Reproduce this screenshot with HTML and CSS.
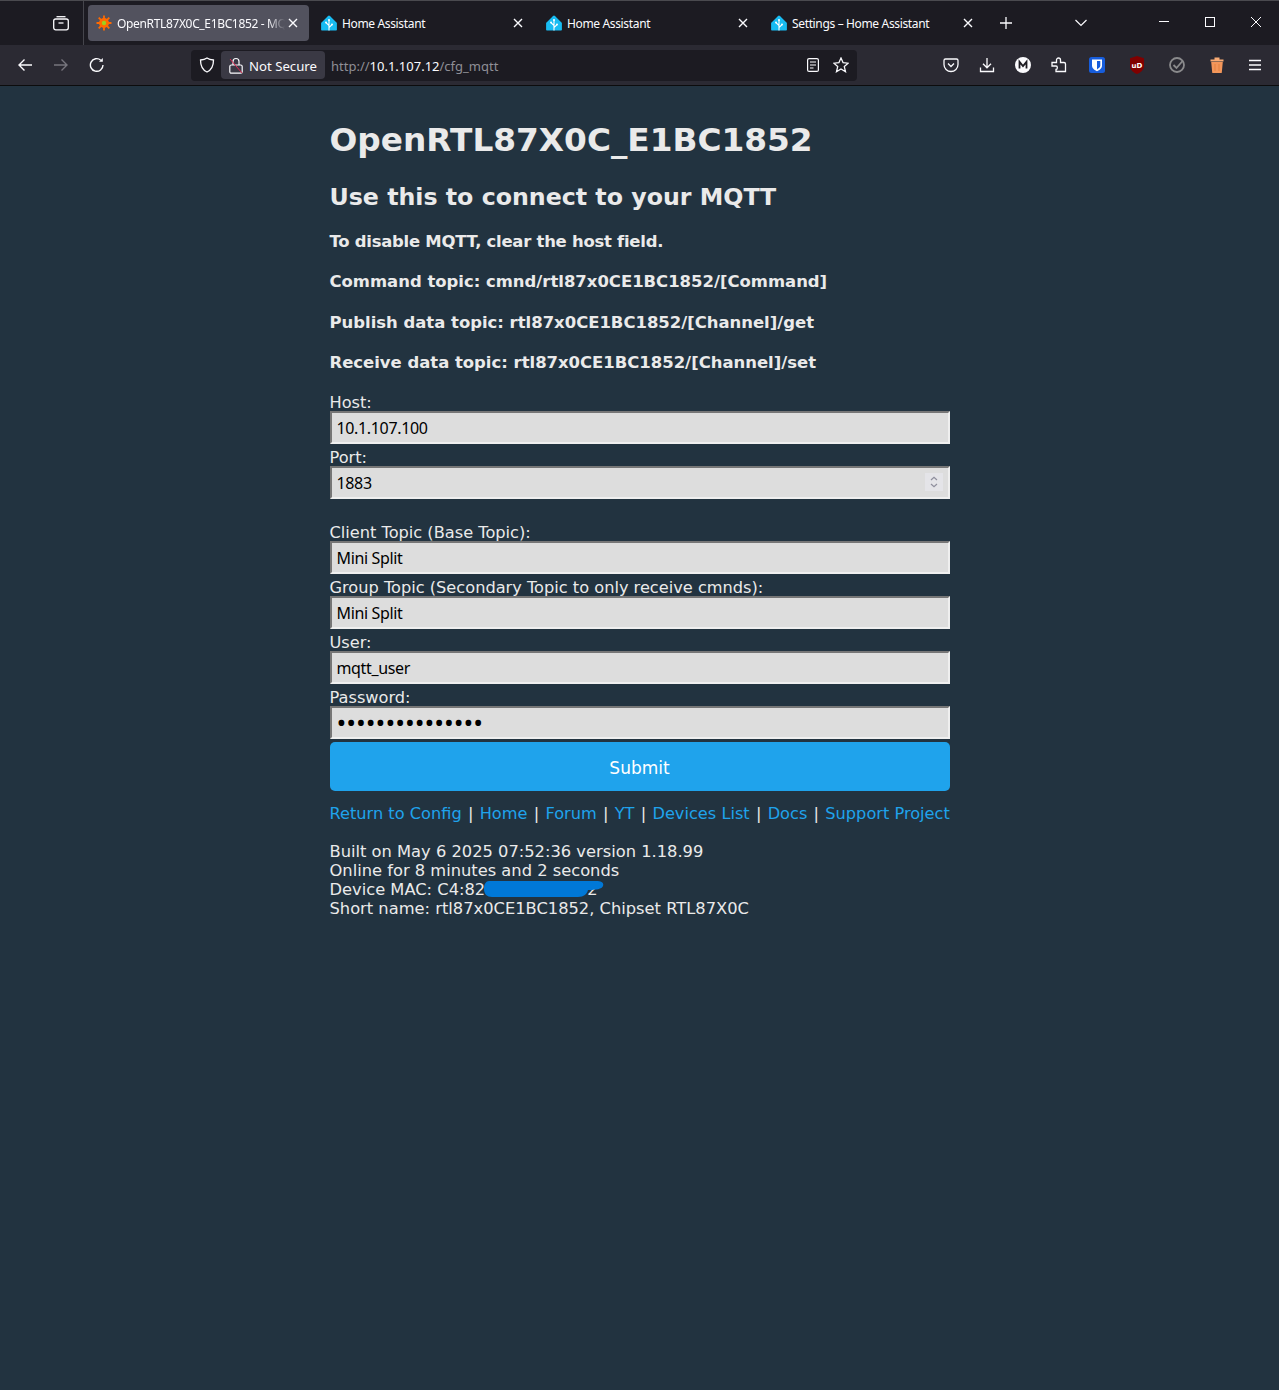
FILE: index.html
```html
<!DOCTYPE html>
<html lang="en">
<head>
    <meta charset="UTF-8">
    <title>OpenRTL87X0C_E1BC1852 - MQTT</title>
    <link rel="stylesheet" href="styles.css">
</head>
<body>

<svg class="defs" width="0" height="0">
    <symbol id="ha" viewBox="0 0 16 16">
        <path d="M7 .9 a1.400 1.400 0 0 1 2 0 L15.500 7.400 a1 1 0 0 1 .4 .8 V14.800 a.8 .8 0 0 1 -.8 .8 H.9 a.8 .8 0 0 1 -.8 -.8 V8.200 a1 1 0 0 1 .4 -.8 Z" fill="#18bcf2"/>
        <path d="M8 5 V15.500 M8 10.500 L5.200 7.800 M8 12.500 L10.800 9.800" fill="none" stroke="#fff" stroke-width="1.100"/>
        <circle cx="8" cy="5" r="1" fill="#fff"/><circle cx="5" cy="7.600" r="1" fill="#fff"/><circle cx="11" cy="9.600" r="1" fill="#fff"/>
    </symbol>
    <symbol id="x" viewBox="0 0 10 10">
        <path d="M1 1 L9 9 M9 1 L1 9" fill="none" stroke="#fbfbfe" stroke-width="1.4"/>
    </symbol>
</svg>

<header class="chrome">
    <div class="tabbar">
        <div class="view-btn">
            <svg width="16" height="16" viewBox="0 0 16 16" fill="none" stroke="#fbfbfe" stroke-width="1.3"><path d="M3.5 1.7 H12.5"/><rect x=".7" y="4" width="14.6" height="10.8" rx="2"/><path d="M5.5 8 H10.5"/></svg>
        </div>
        <div class="tab tab-active">
            <svg class="tab-icon" width="16" height="16" viewBox="0 0 16 16"><g stroke="#ff6a00" stroke-width="1.800"><path d="M8 .5 V15.500 M.5 8 H15.500 M2.700 2.700 L13.300 13.300 M13.300 2.700 L2.700 13.300"/></g><circle cx="8" cy="8" r="5" fill="#ff6a00"/><circle cx="8" cy="8" r="2.200" fill="#9ccf1f"/></svg>
            <span class="tab-title tab-fade">OpenRTL87X0C_E1BC1852 - MQTT</span>
            <svg class="tab-close" width="10" height="10"><use href="#x"/></svg>
        </div>
        <div class="tab">
            <svg class="tab-icon" width="16" height="16"><use href="#ha"/></svg>
            <span class="tab-title">Home Assistant</span>
            <svg class="tab-close" width="10" height="10"><use href="#x"/></svg>
        </div>
        <div class="tab">
            <svg class="tab-icon" width="16" height="16"><use href="#ha"/></svg>
            <span class="tab-title">Home Assistant</span>
            <svg class="tab-close" width="10" height="10"><use href="#x"/></svg>
        </div>
        <div class="tab">
            <svg class="tab-icon" width="16" height="16"><use href="#ha"/></svg>
            <span class="tab-title">Settings – Home Assistant</span>
            <svg class="tab-close" width="10" height="10"><use href="#x"/></svg>
        </div>
        <div class="new-tab">
            <svg width="14" height="14" viewBox="0 0 14 14" fill="none" stroke="#fbfbfe" stroke-width="1.3"><path d="M7 1 V13 M1 7 H13"/></svg>
        </div>
        <div class="tab-list">
            <svg width="14" height="8" viewBox="0 0 14 8" fill="none" stroke="#fbfbfe" stroke-width="1.2"><path d="M1.5 1 L7 6.5 L12.5 1"/></svg>
        </div>
        <div class="window-btns">
            <svg width="12" height="12" viewBox="0 0 12 12" stroke="#fbfbfe" fill="none"><path d="M1 5.5 H11"/></svg>
            <svg width="12" height="12" viewBox="0 0 12 12" stroke="#fbfbfe" fill="none"><rect x="1.5" y="1.5" width="9" height="9"/></svg>
            <svg width="12" height="12" viewBox="0 0 12 12" stroke="#fbfbfe" fill="none"><path d="M1 1 L11 11 M11 1 L1 11"/></svg>
        </div>
    </div>

    <div class="toolbar">
        <div class="nav-btns">
            <svg width="16" height="16" viewBox="0 0 16 16" fill="none" stroke="#fbfbfe" stroke-width="1.4"><path d="M15 8 H2 M7.5 2.5 L2 8 L7.5 13.5"/></svg>
            <svg width="16" height="16" viewBox="0 0 16 16" fill="none" stroke="#77767e" stroke-width="1.4"><path d="M1 8 H14 M8.500 2.5 L14 8 L8.500 13.5"/></svg>
            <svg width="16" height="16" viewBox="0 0 16 16" fill="none" stroke="#fbfbfe" stroke-width="1.4"><path d="M14 8 A6.300 6.300 0 1 1 11.800 3.200"/><path d="M13.800 1 V4.800 H10" fill="#fbfbfe" stroke="none"/></svg>
        </div>
        <div class="urlbar">
            <svg class="shield" width="16" height="16" viewBox="0 0 16 16" fill="none" stroke="#fbfbfe" stroke-width="1.3"><path d="M8 1 C10 2.400 12 2.800 14.500 3 C14.500 9 12.500 13 8 15 C3.500 13 1.500 9 1.500 3 C4 2.800 6 2.400 8 1 Z"/></svg>
            <div class="not-secure">
                <svg width="14" height="17" viewBox="0 0 14 17" fill="none" stroke="#fbfbfe" stroke-width="1.200"><path d="M4 8 V4.500 A3 3 0 0 1 10 4.500 V8"/><rect x=".8" y="8" width="12.400" height="8.200" rx="1.500"/><path d="M1 2 L13 16" stroke="#e22850" stroke-width="1"/></svg>
                <span class="not-secure-text">Not Secure</span>
            </div>
            <div class="url"><span class="url-dim">http://</span>10.1.107.12<span class="url-dim">/cfg_mqtt</span></div>
            <svg class="reader" width="12" height="14" viewBox="0 0 12 14" fill="none" stroke="#fbfbfe" stroke-width="1.200"><rect x=".6" y=".6" width="10.800" height="12.800" rx="1.500"/><path d="M3 4 H9 M3 7 H9 M3 10 H6.500"/></svg>
            <svg class="star" width="16" height="16" viewBox="0 0 16 16" fill="none" stroke="#fbfbfe" stroke-width="1.300"><path d="M8 1 L10.100 5.700 L15.200 6.200 L11.300 9.600 L12.500 14.700 L8 12 L3.500 14.700 L4.700 9.600 L.8 6.200 L5.900 5.700 Z"/></svg>
        </div>
        <div class="addons">
            <span class="addon"><svg width="16" height="16" viewBox="0 0 16 16" fill="none" stroke="#fbfbfe" stroke-width="1.300"><path d="M2.500 2 H13.500 A1.500 1.500 0 0 1 15 3.500 V7.500 A7 7 0 0 1 1 7.500 V3.500 A1.500 1.500 0 0 1 2.500 2 Z"/><path d="M5 6.500 L8 9.500 L11 6.500"/></svg></span>
            <span class="addon"><svg width="16" height="16" viewBox="0 0 16 16" fill="none" stroke="#fbfbfe" stroke-width="1.300"><path d="M8 1 V10.500 M4 6.800 L8 10.800 L12 6.800 M1.500 10.500 V14.500 H14.500 V10.500"/></svg></span>
            <span class="addon"><svg width="16" height="16" viewBox="0 0 16 16"><circle cx="8" cy="8" r="8" fill="#fbfbfe"/><path d="M4.500 11.500 V4.800 L8 9 L11.500 4.800 V11.500" fill="none" stroke="#1c1b22" stroke-width="1.800"/></svg></span>
            <span class="addon"><svg width="16" height="16" viewBox="0 0 16 16" fill="none" stroke="#fbfbfe" stroke-width="1.300"><path d="M1 9 V5.500 H5.500 V3 A2 2 0 0 1 9.500 3 V5.500 H13 A1.500 1.500 0 0 1 14.500 7 V14.500 H5 V12.500 C6.800 12.500 6.800 9 5 9 Z"/></svg></span>
            <span class="addon addon-wide"><svg width="16" height="16" viewBox="0 0 16 16"><rect width="16" height="16" rx="2.500" fill="#175ddc"/><path d="M3 2.500 H13 V8.500 C13 11.500 10.500 13 8 14.300 C5.500 13 3 11.500 3 8.500 Z" fill="#fff"/><path d="M8 4 H11.300 V8.500 C11.300 10.300 9.600 11.400 8 12.400 Z" fill="#175ddc"/></svg></span>
            <span class="addon addon-wide"><svg width="14" height="18" viewBox="0 0 14 18"><path d="M7 0 L14 2.200 V10 C14 14 10 17 7 18 C4 17 0 14 0 10 V2.200 Z" fill="#800000"/><text class="ublock" x="7" y="11.500">uD</text></svg></span>
            <span class="addon addon-wide"><svg width="16" height="16" viewBox="0 0 16 16" fill="none" stroke="#8a8a8c" stroke-width="1.800"><circle cx="8" cy="8" r="7"/><path d="M4.500 8 L7.500 11 L14 3.500"/></svg></span>
            <span class="addon addon-wide"><svg width="14" height="16" viewBox="0 0 14 16"><path d="M.5 2.500 H13.500 V4.500 H.5 Z M4.500 .5 H9.500 V2.500 H4.500 Z" fill="#f9ab74"/><path d="M1.200 5 H12.800 L11.800 15.500 A.5 .5 0 0 1 11.300 16 H2.700 A.5 .5 0 0 1 2.200 15.500 Z" fill="#f3965a"/><path d="M5 7 V14 M9 7 V14" stroke="#e2803f" stroke-width="1"/></svg></span>
            <span class="addon"><svg width="14" height="12" viewBox="0 0 14 12" stroke="#fbfbfe" stroke-width="1.300"><path d="M1 1.500 H13 M1 6 H13 M1 10.500 H13"/></svg></span>
        </div>
    </div>
</header>

<main class="page">
    <div class="container">
        <h1>OpenRTL87X0C_E1BC1852</h1>
        <h2>Use this to connect to your MQTT</h2>
        <h3 class="first-note">To disable MQTT, clear the host field.</h3>
        <h3>Command topic: cmnd/rtl87x0CE1BC1852/[Command]</h3>
        <h3>Publish data topic: rtl87x0CE1BC1852/[Channel]/get</h3>
        <h3>Receive data topic: rtl87x0CE1BC1852/[Channel]/set</h3>

        <form class="mqtt-form">
            <label class="field">Host:<input class="text-input" type="text" value="10.1.107.100"></label>
            <label class="field field-spaced">Port:
                <span class="number-wrap">
                    <input class="text-input" type="text" value="1883">
                    <span class="spinner">
                        <svg width="8" height="12" viewBox="0 0 8 12" fill="none" stroke="#8f8f9d" stroke-width="1.200"><path d="M1 4 L4 1.200 L7 4 M1 8 L4 10.800 L7 8"/></svg>
                    </span>
                </span>
            </label>
            <label class="field">Client Topic (Base Topic):<input class="text-input" type="text" value="Mini Split"></label>
            <label class="field">Group Topic (Secondary Topic to only receive cmnds):<input class="text-input" type="text" value="Mini Split"></label>
            <label class="field">User:<input class="text-input" type="text" value="mqtt_user"></label>
            <label class="field">Password:<input class="text-input password-input" type="password" value="aaaaaaaaaaaaaaa"></label>
            <button class="submit-button" type="button">Submit</button>
        </form>

        <nav class="links">
            <a href="#">Return to Config</a> | <a href="#">Home</a> | <a href="#">Forum</a> | <a href="#">YT</a> | <a href="#">Devices List</a> | <a href="#">Docs</a> | <a href="#">Support Project</a>
        </nav>

        <div class="info">
            <div>Built on May 6 2025 07:52:36 version 1.18.99</div>
            <div>Online for 8 minutes and 2 seconds</div>
            <div class="mac-line">Device MAC: C4:82<span class="mac-end">2</span>
                <svg class="scribble" width="120" height="18" viewBox="0 0 120 18"><path d="M5 1 H112 C118 1 120 3 119 6 C118 9 112 10 104 10 C103 14 100 17 94 17 H8 C3 17 0 14 0 9 C0 4 2 1 5 1 Z" fill="#0078d7"/></svg>
            </div>
            <div>Short name: rtl87x0CE1BC1852, Chipset RTL87X0C</div>
        </div>
    </div>
</main>

</body>
</html>
```

FILE: styles.css
```css
* {
    box-sizing: border-box;
}
html, body {
    height: 100%;
}
body {
    margin: 0;
    display: flex;
    flex-direction: column;
    background: #223340;
    font-family: "DejaVu Sans", Verdana, sans-serif;
}
.defs {
    position: absolute;
}

/* browser chrome */
.chrome {
    flex: none;
    color: #fbfbfe;
    font-family: "Noto Sans", Roboto, sans-serif;
    border-bottom: 1px solid #0c0c0d;
}
.tabbar {
    height: 45px;
    display: flex;
    align-items: center;
    background: #1c1b22;
    border-top: 1px solid #4a4a4f;
    padding-bottom: 1px;
}
.view-btn {
    width: 84px;
    height: 44px;
    padding-left: 53px;
    display: flex;
    align-items: center;
    border-right: 1px solid #45454c;
}
.tab {
    width: 225px;
    height: 36px;
    padding: 0 8px;
    display: flex;
    align-items: center;
    font-size: 12px;
    letter-spacing: -0.35px;
}
.tab-active {
    width: 221px;
    margin: 0 4px;
    background: #52525e;
    border-radius: 4px;
}
.tab-icon {
    flex: none;
    margin-right: 5px;
}
.tab-title {
    flex: 1;
    padding-top: 2px;
    overflow: hidden;
    white-space: nowrap;
}
.tab-fade {
    -webkit-mask-image: linear-gradient(to right, #000 90%, transparent);
    mask-image: linear-gradient(to right, #000 90%, transparent);
}
.tab-close {
    flex: none;
    margin: 0 7px 0 8px;
}
.tab-active .tab-close {
    margin: 0 3px 0 3px;
}
.new-tab {
    width: 36px;
    display: flex;
    justify-content: center;
}
.tab-list {
    width: 38px;
    margin-left: 38px;
    display: flex;
    justify-content: center;
}
.window-btns {
    margin-left: auto;
    width: 138px;
    display: flex;
    justify-content: space-between;
    padding: 0 17px 2px 17px;
}
.toolbar {
    height: 40px;
    display: flex;
    align-items: center;
    background: #2b2a33;
}
.nav-btns {
    width: 191px;
    padding: 0 86px 0 17px;
    display: flex;
    justify-content: space-between;
}
.urlbar {
    width: 666px;
    height: 31px;
    padding: 0 8px;
    display: flex;
    align-items: center;
    background: #1c1b22;
    border-radius: 4px;
}
.shield {
    flex: none;
}
.not-secure {
    margin-left: 6px;
    width: 104px;
    height: 28px;
    padding-left: 8px;
    display: flex;
    align-items: center;
    gap: 6px;
    background: #3a3944;
    border-radius: 4px;
    font-size: 13.200px;
    white-space: nowrap;
}
.not-secure-text {
    padding-top: 2px;
}
.url {
    flex: 1;
    margin-left: 6px;
    padding-top: 2px;
    font-size: 13px;
    white-space: nowrap;
}
.url-dim {
    color: #8f8f96;
}
.reader {
    margin-right: 14px;
}
.addons {
    flex: 1;
    padding-left: 76px;
    display: flex;
    align-items: center;
}
.addon {
    width: 36px;
    display: flex;
    justify-content: center;
}
.addon-wide {
    width: 40px;
}
.ublock {
    fill: #fff;
    font: bold 7px "DejaVu Sans", sans-serif;
    text-anchor: middle;
}

/* page */
.page {
    flex: 1;
}
.container {
    width: 620px;
    margin: 0 auto;
    color: #eaeaea;
    font-size: 16.200px;
}
h1 {
    margin: 34px 0 0;
    font-size: 32.750px;
    line-height: 40px;
}
h2 {
    margin: 21px 0 0;
    font-size: 23.700px;
    line-height: 32px;
}
h3 {
    margin: 20.330px 0 0;
    font-size: 16.450px;
    line-height: 20px;
}
.first-note {
    margin-top: 19px;
    letter-spacing: -0.25px;
}
.mqtt-form {
    margin-top: 21px;
}
.field {
    display: block;
    line-height: 17px;
    margin-bottom: 5px;
}
.field-spaced {
    margin-bottom: 25px;
}
.text-input {
    display: block;
    width: 100%;
    height: 33px;
    padding: 7px 5px 5px;
    border: 2px solid;
    border-color: #767676 #efefef #efefef #767676;
    background: #dddddd;
    color: #000;
    font-family: "Noto Sans", Roboto, sans-serif;
    font-size: 16px;
    letter-spacing: -0.35px;
    border-radius: 0;
    outline: none;
}
.password-input {
    font-size: 26px;
    letter-spacing: 0;
    padding: 0 5px;
}
.number-wrap {
    display: block;
    position: relative;
}
.spinner {
    position: absolute;
    right: 7px;
    top: 7px;
    width: 18px;
    height: 18px;
    background: #e4e4e8;
    display: flex;
    align-items: center;
    justify-content: center;
}
.submit-button {
    display: block;
    width: 100%;
    height: 49px;
    margin-top: -2px;
    padding-top: 4px;
    border: 0;
    border-radius: 5px;
    background: #1fa3ec;
    color: #fff;
    font-family: "DejaVu Sans", Verdana, sans-serif;
    font-size: 17px;
}
.links {
    margin-top: 13px;
    line-height: 19px;
    white-space: nowrap;
    word-spacing: 1.100px;
}
.links a {
    color: #1fa3ec;
    text-decoration: none;
    word-spacing: 0;
}
.info {
    margin-top: 19px;
    line-height: 19px;
    font-size: 16.300px;
}
.mac-line {
    position: relative;
}
.mac-end {
    margin-left: 102px;
}
.scribble {
    position: absolute;
    left: 154px;
    top: 0;
}
```
